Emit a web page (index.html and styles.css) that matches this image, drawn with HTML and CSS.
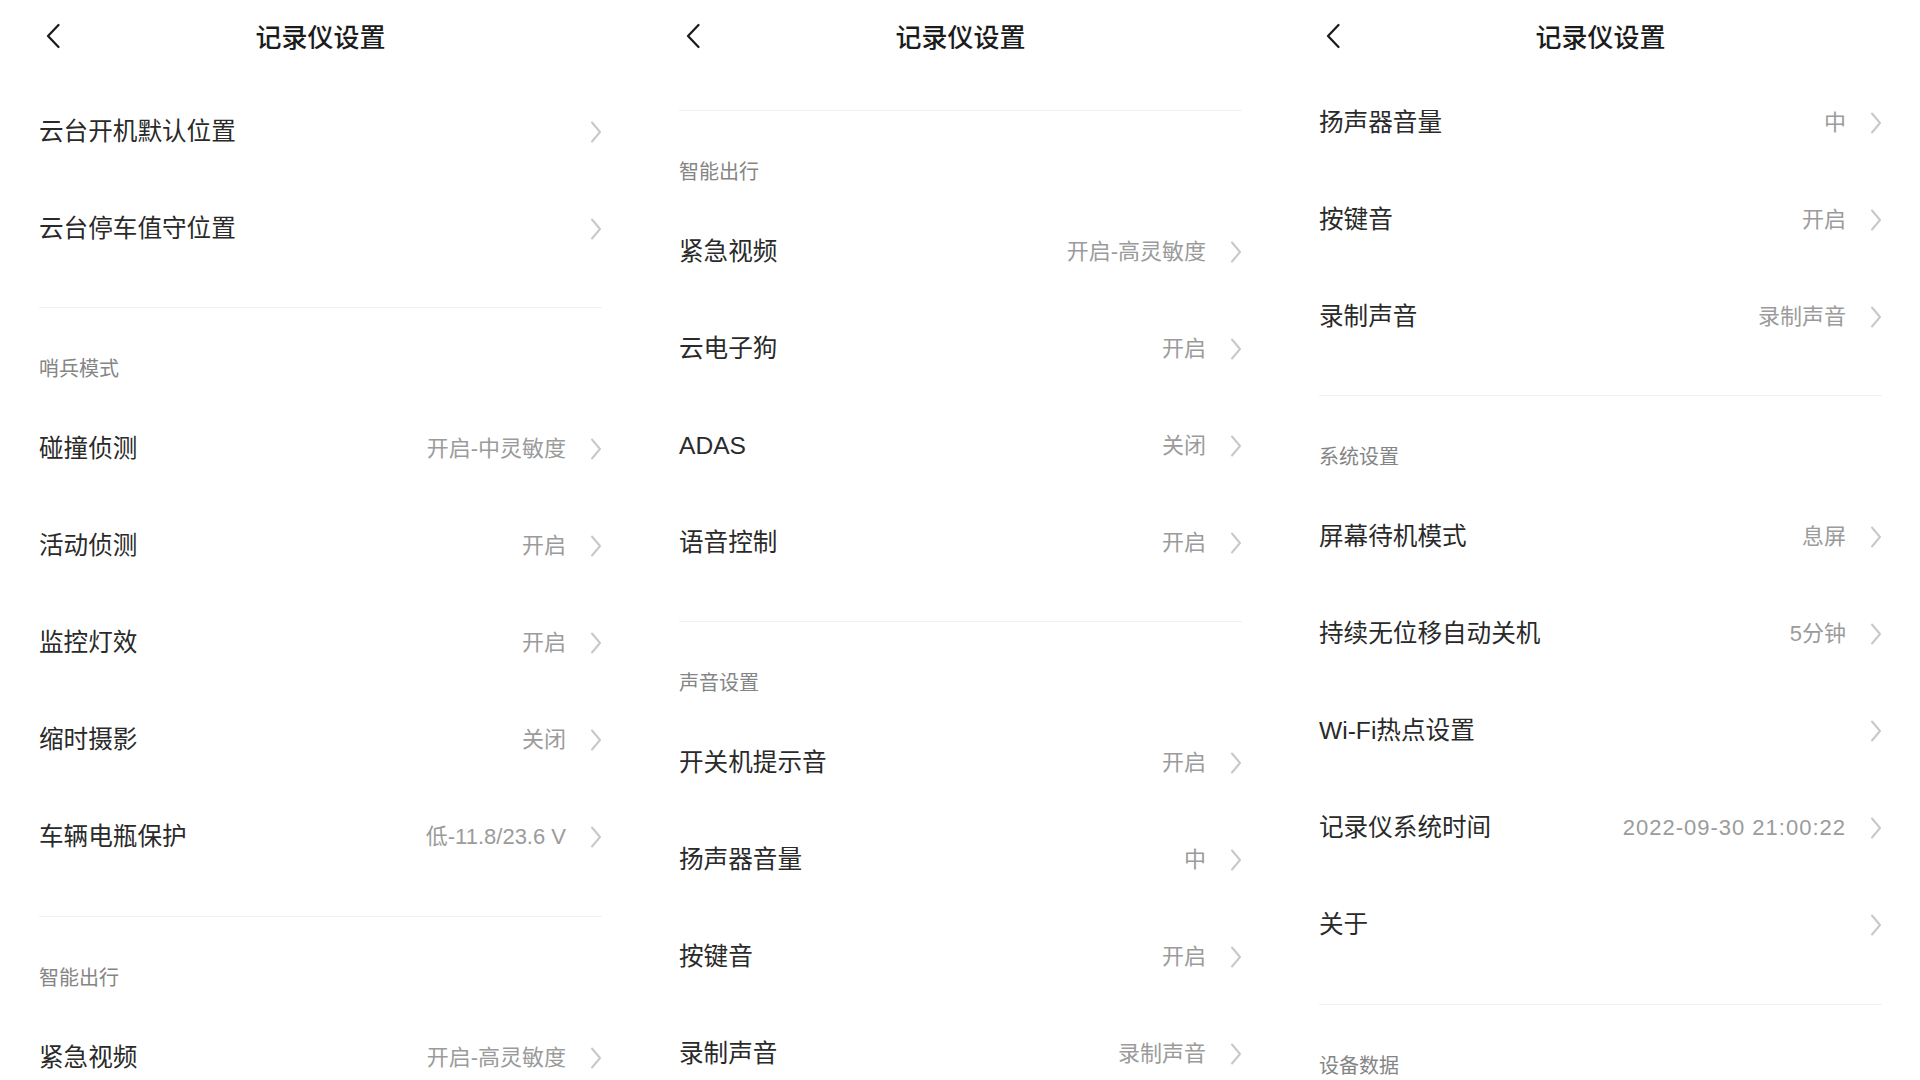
FILE: index.html
```html
<!DOCTYPE html>
<html lang="zh-CN">
<head>
<meta charset="utf-8">
<title>记录仪设置</title>
<link rel="stylesheet" href="styles.css">
</head>
<body>
<div class="screens">

  <!-- Screen 1 -->
  <div class="panel">
    <header class="header">
      <svg class="back" width="16" height="26" viewBox="0 0 16 26"><path d="M13.5 2 L3 13 L13.5 24" fill="none" stroke="#1c1c1c" stroke-width="2.3" stroke-linecap="round" stroke-linejoin="round"/></svg>
      <h1 class="title">记录仪设置</h1>
      <span></span>
    </header>
    <div class="list pad-1">
      <section class="group">
        <div class="row"><span class="name">云台开机默认位置</span><span class="right"><svg class="chev" width="12" height="22" viewBox="0 0 12 22"><path d="M2 1.5 L10 11 L2 20.5" fill="none" stroke="#c8c8c8" stroke-width="2" stroke-linecap="round" stroke-linejoin="round"/></svg></span></div>
        <div class="row"><span class="name">云台停车值守位置</span><span class="right"><svg class="chev" width="12" height="22" viewBox="0 0 12 22"><path d="M2 1.5 L10 11 L2 20.5" fill="none" stroke="#c8c8c8" stroke-width="2" stroke-linecap="round" stroke-linejoin="round"/></svg></span></div>
      </section>
      <div class="section-title">哨兵模式</div>
      <section class="group">
        <div class="row"><span class="name">碰撞侦测</span><span class="right"><span class="value">开启-中灵敏度</span><svg class="chev" width="12" height="22" viewBox="0 0 12 22"><path d="M2 1.5 L10 11 L2 20.5" fill="none" stroke="#c8c8c8" stroke-width="2" stroke-linecap="round" stroke-linejoin="round"/></svg></span></div>
        <div class="row"><span class="name">活动侦测</span><span class="right"><span class="value">开启</span><svg class="chev" width="12" height="22" viewBox="0 0 12 22"><path d="M2 1.5 L10 11 L2 20.5" fill="none" stroke="#c8c8c8" stroke-width="2" stroke-linecap="round" stroke-linejoin="round"/></svg></span></div>
        <div class="row"><span class="name">监控灯效</span><span class="right"><span class="value">开启</span><svg class="chev" width="12" height="22" viewBox="0 0 12 22"><path d="M2 1.5 L10 11 L2 20.5" fill="none" stroke="#c8c8c8" stroke-width="2" stroke-linecap="round" stroke-linejoin="round"/></svg></span></div>
        <div class="row"><span class="name">缩时摄影</span><span class="right"><span class="value">关闭</span><svg class="chev" width="12" height="22" viewBox="0 0 12 22"><path d="M2 1.5 L10 11 L2 20.5" fill="none" stroke="#c8c8c8" stroke-width="2" stroke-linecap="round" stroke-linejoin="round"/></svg></span></div>
        <div class="row"><span class="name">车辆电瓶保护</span><span class="right"><span class="value">低-11.8/23.6 V</span><svg class="chev" width="12" height="22" viewBox="0 0 12 22"><path d="M2 1.5 L10 11 L2 20.5" fill="none" stroke="#c8c8c8" stroke-width="2" stroke-linecap="round" stroke-linejoin="round"/></svg></span></div>
      </section>
      <div class="section-title">智能出行</div>
      <section class="group">
        <div class="row"><span class="name">紧急视频</span><span class="right"><span class="value">开启-高灵敏度</span><svg class="chev" width="12" height="22" viewBox="0 0 12 22"><path d="M2 1.5 L10 11 L2 20.5" fill="none" stroke="#c8c8c8" stroke-width="2" stroke-linecap="round" stroke-linejoin="round"/></svg></span></div>
      </section>
    </div>
  </div>

  <!-- Screen 2 -->
  <div class="panel">
    <header class="header">
      <svg class="back" width="16" height="26" viewBox="0 0 16 26"><path d="M13.5 2 L3 13 L13.5 24" fill="none" stroke="#1c1c1c" stroke-width="2.3" stroke-linecap="round" stroke-linejoin="round"/></svg>
      <h1 class="title">记录仪设置</h1>
      <span></span>
    </header>
    <div class="list pad-2">
      <section class="group group-tail"></section>
      <div class="section-title">智能出行</div>
      <section class="group">
        <div class="row"><span class="name">紧急视频</span><span class="right"><span class="value">开启-高灵敏度</span><svg class="chev" width="12" height="22" viewBox="0 0 12 22"><path d="M2 1.5 L10 11 L2 20.5" fill="none" stroke="#c8c8c8" stroke-width="2" stroke-linecap="round" stroke-linejoin="round"/></svg></span></div>
        <div class="row"><span class="name">云电子狗</span><span class="right"><span class="value">开启</span><svg class="chev" width="12" height="22" viewBox="0 0 12 22"><path d="M2 1.5 L10 11 L2 20.5" fill="none" stroke="#c8c8c8" stroke-width="2" stroke-linecap="round" stroke-linejoin="round"/></svg></span></div>
        <div class="row"><span class="name">ADAS</span><span class="right"><span class="value">关闭</span><svg class="chev" width="12" height="22" viewBox="0 0 12 22"><path d="M2 1.5 L10 11 L2 20.5" fill="none" stroke="#c8c8c8" stroke-width="2" stroke-linecap="round" stroke-linejoin="round"/></svg></span></div>
        <div class="row"><span class="name">语音控制</span><span class="right"><span class="value">开启</span><svg class="chev" width="12" height="22" viewBox="0 0 12 22"><path d="M2 1.5 L10 11 L2 20.5" fill="none" stroke="#c8c8c8" stroke-width="2" stroke-linecap="round" stroke-linejoin="round"/></svg></span></div>
      </section>
      <div class="section-title">声音设置</div>
      <section class="group">
        <div class="row"><span class="name">开关机提示音</span><span class="right"><span class="value">开启</span><svg class="chev" width="12" height="22" viewBox="0 0 12 22"><path d="M2 1.5 L10 11 L2 20.5" fill="none" stroke="#c8c8c8" stroke-width="2" stroke-linecap="round" stroke-linejoin="round"/></svg></span></div>
        <div class="row"><span class="name">扬声器音量</span><span class="right"><span class="value">中</span><svg class="chev" width="12" height="22" viewBox="0 0 12 22"><path d="M2 1.5 L10 11 L2 20.5" fill="none" stroke="#c8c8c8" stroke-width="2" stroke-linecap="round" stroke-linejoin="round"/></svg></span></div>
        <div class="row"><span class="name">按键音</span><span class="right"><span class="value">开启</span><svg class="chev" width="12" height="22" viewBox="0 0 12 22"><path d="M2 1.5 L10 11 L2 20.5" fill="none" stroke="#c8c8c8" stroke-width="2" stroke-linecap="round" stroke-linejoin="round"/></svg></span></div>
        <div class="row"><span class="name">录制声音</span><span class="right"><span class="value">录制声音</span><svg class="chev" width="12" height="22" viewBox="0 0 12 22"><path d="M2 1.5 L10 11 L2 20.5" fill="none" stroke="#c8c8c8" stroke-width="2" stroke-linecap="round" stroke-linejoin="round"/></svg></span></div>
      </section>
    </div>
  </div>

  <!-- Screen 3 -->
  <div class="panel">
    <header class="header">
      <svg class="back" width="16" height="26" viewBox="0 0 16 26"><path d="M13.5 2 L3 13 L13.5 24" fill="none" stroke="#1c1c1c" stroke-width="2.3" stroke-linecap="round" stroke-linejoin="round"/></svg>
      <h1 class="title">记录仪设置</h1>
      <span></span>
    </header>
    <div class="list pad-3">
      <section class="group">
        <div class="row"><span class="name">扬声器音量</span><span class="right"><span class="value">中</span><svg class="chev" width="12" height="22" viewBox="0 0 12 22"><path d="M2 1.5 L10 11 L2 20.5" fill="none" stroke="#c8c8c8" stroke-width="2" stroke-linecap="round" stroke-linejoin="round"/></svg></span></div>
        <div class="row"><span class="name">按键音</span><span class="right"><span class="value">开启</span><svg class="chev" width="12" height="22" viewBox="0 0 12 22"><path d="M2 1.5 L10 11 L2 20.5" fill="none" stroke="#c8c8c8" stroke-width="2" stroke-linecap="round" stroke-linejoin="round"/></svg></span></div>
        <div class="row"><span class="name">录制声音</span><span class="right"><span class="value">录制声音</span><svg class="chev" width="12" height="22" viewBox="0 0 12 22"><path d="M2 1.5 L10 11 L2 20.5" fill="none" stroke="#c8c8c8" stroke-width="2" stroke-linecap="round" stroke-linejoin="round"/></svg></span></div>
      </section>
      <div class="section-title">系统设置</div>
      <section class="group">
        <div class="row"><span class="name">屏幕待机模式</span><span class="right"><span class="value">息屏</span><svg class="chev" width="12" height="22" viewBox="0 0 12 22"><path d="M2 1.5 L10 11 L2 20.5" fill="none" stroke="#c8c8c8" stroke-width="2" stroke-linecap="round" stroke-linejoin="round"/></svg></span></div>
        <div class="row"><span class="name">持续无位移自动关机</span><span class="right"><span class="value">5分钟</span><svg class="chev" width="12" height="22" viewBox="0 0 12 22"><path d="M2 1.5 L10 11 L2 20.5" fill="none" stroke="#c8c8c8" stroke-width="2" stroke-linecap="round" stroke-linejoin="round"/></svg></span></div>
        <div class="row"><span class="name">Wi-Fi热点设置</span><span class="right"><svg class="chev" width="12" height="22" viewBox="0 0 12 22"><path d="M2 1.5 L10 11 L2 20.5" fill="none" stroke="#c8c8c8" stroke-width="2" stroke-linecap="round" stroke-linejoin="round"/></svg></span></div>
        <div class="row"><span class="name">记录仪系统时间</span><span class="right"><span class="value value-date">2022-09-30 21:00:22</span><svg class="chev" width="12" height="22" viewBox="0 0 12 22"><path d="M2 1.5 L10 11 L2 20.5" fill="none" stroke="#c8c8c8" stroke-width="2" stroke-linecap="round" stroke-linejoin="round"/></svg></span></div>
        <div class="row"><span class="name">关于</span><span class="right"><svg class="chev" width="12" height="22" viewBox="0 0 12 22"><path d="M2 1.5 L10 11 L2 20.5" fill="none" stroke="#c8c8c8" stroke-width="2" stroke-linecap="round" stroke-linejoin="round"/></svg></span></div>
      </section>
      <div class="section-title">设备数据</div>
    </div>
  </div>

</div>
</body>
</html>
```

FILE: styles.css
```css
* {
  box-sizing: border-box;
}

html, body {
  margin: 0;
  padding: 0;
  background: #ffffff;
}

body {
  font-family: "Liberation Sans", "Noto Sans CJK SC", sans-serif;
  color: #2a2a2a;
  width: 1920px;
  height: 1080px;
  overflow: hidden;
}

.screens {
  display: grid;
  grid-template-columns: repeat(3, 640px);
  height: 1080px;
}

.panel {
  height: 1080px;
  overflow: hidden;
  background: #ffffff;
  padding: 0 38px 0 39px;
}

.header {
  height: 72px;
  display: grid;
  grid-template-columns: 1fr auto 1fr;
  align-items: center;
}

.back {
  display: block;
  margin-left: 6px;
}

.title {
  margin: 0;
  font-family: "Noto Sans CJK SC", sans-serif;
  font-size: 26px;
  font-weight: 500;
  line-height: 32px;
  color: #1c1c1c;
  text-align: center;
}

.list {
  display: flex;
  flex-direction: column;
}

.pad-1 {
  padding-top: 11px;
}

.pad-2 {
  padding-top: 7.5px;
}

.pad-3 {
  padding-top: 2px;
}

.group {
  padding-bottom: 30px;
  border-bottom: 1px solid #f1f1f1;
}

.group-tail {
  padding-bottom: 30px;
}

.row {
  height: 97px;
  display: flex;
  align-items: center;
  justify-content: space-between;
}

.name {
  font-size: 24.6px;
  line-height: 30px;
  color: #2a2a2a;
  white-space: nowrap;
}

.right {
  display: flex;
  align-items: center;
}

.value {
  font-size: 22px;
  line-height: 28px;
  color: #9b9b9b;
  margin-right: 24px;
  white-space: nowrap;
}

.value-date {
  letter-spacing: 1px;
}

.chev {
  display: block;
}

.section-title {
  padding-top: 49px;
  padding-bottom: 19.5px;
  font-size: 20px;
  line-height: 24px;
  color: #858585;
}
```
